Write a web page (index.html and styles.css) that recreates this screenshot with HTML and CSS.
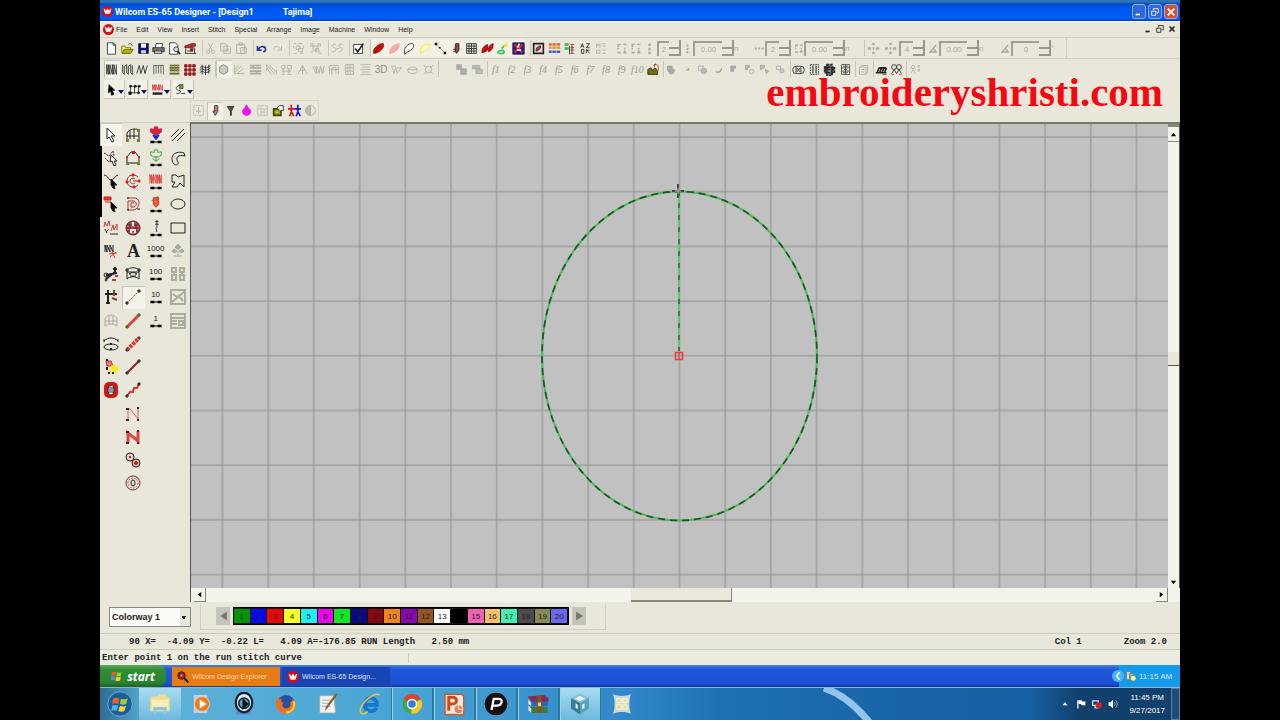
FILE: index.html
```html
<!DOCTYPE html>
<html lang="en">
<head>
    <meta charset="UTF-8">
    <meta name="viewport" content="width=device-width, initial-scale=1.0">
    <title>Wilcom ES-65 Designer</title>
    <link rel="stylesheet" href="styles.css">
</head>
<body>
<svg class="defs" aria-hidden="true">
    <symbol id="logo" viewBox="0 0 16 16"><circle cx="8" cy="8" r="8" fill="#d01018"/><path d="M3 4l2 7h6l2-7-3 4-2-4-2 4z" fill="#fff" stroke="#fff"/></symbol>
    <symbol id="bow" viewBox="0 0 16 5"><path d="M1 1h5v3H1zM10 1h5v3h-5zM6 2h4v1H6z" fill="#000"/></symbol>
    <symbol id="pts" viewBox="0 0 16 16"><path d="M3 3h4M10 3h4M3 8h2M11 8h2M3 13h4M10 13h4M4 3v3M12 10v3" stroke-width="2"/></symbol>
    <symbol id="vdots" viewBox="0 0 16 16"><path d="M8 2v3M8 7v3M8 12v3" stroke-width="3"/></symbol>
    <symbol id="hdots" viewBox="0 0 16 16"><path d="M1 8h3M6 8h3M11 8h3" stroke-width="3"/></symbol>
    <symbol id="cross" viewBox="0 0 16 16"><path d="M8 1v3M8 12v3M1 8h4M11 8h4M7 8h2" stroke-width="3"/></symbol>
    <symbol id="angle" viewBox="0 0 16 16"><path d="M12 3L3 13h10M8 8l3 4" stroke-width="2"/></symbol>
    <symbol id="needle" viewBox="0 0 16 16"><path d="M9 1v9M7 3h4M7 6h4M8 10l1 5"/></symbol>
</svg>
<div class="screen">
    <header class="titlebar">
        <svg class="logo"><use href="#logo"/></svg>
        <h1>Wilcom ES-65 Designer - [Design1</h1>
        <span class="machine">Tajima]</span>
        <div class="window-buttons">
            <button aria-label="Minimize"><svg viewBox="0 0 12 12"><path d="M2 9h5" stroke-width="2"/></svg></button>
            <button aria-label="Restore"><svg viewBox="0 0 12 12"><path d="M4 4V2h6v5H8M2 5h5v5H2z"/></svg></button>
            <button class="close" aria-label="Close"><svg viewBox="0 0 12 12"><path d="M2 2l8 8M10 2l-8 8" stroke-width="2"/></svg></button>
        </div>
    </header>

    <nav class="menubar">
        <svg class="logo"><use href="#logo"/></svg>
        <a href="#">File</a><a href="#">Edit</a><a href="#">View</a><a href="#">Insert</a><a href="#">Stitch</a><a href="#">Special</a><a href="#">Arrange</a><a href="#">Image</a><a href="#">Machine</a><a href="#">Window</a><a href="#">Help</a>
        <div class="child-buttons">
            <button aria-label="Minimize design"><svg viewBox="0 0 12 12"><path d="M3 9h5" stroke-width="2"/></svg></button>
            <button aria-label="Restore design"><svg viewBox="0 0 12 12"><path d="M4 4V2h6v5H8M2 5h5v5H2z"/></svg></button>
            <button aria-label="Close design"><svg viewBox="0 0 12 12"><path d="M3 3l6 6M9 3l-6 6" stroke-width="2"/></svg></button>
        </div>
    </nav>

    <div class="toolbar standard">
        <div class="group">
            <button aria-label="New"><svg viewBox="0 0 16 16"><path d="M3 1h7l3 3v11H3zM10 1v3h3" fill="#fff"/></svg></button>
            <button aria-label="Open"><svg viewBox="0 0 16 16"><path d="M1 13V5h4l1 2h6v2" fill="#ffff60" stroke="#606000"/><path d="M1 14l3-5h11l-3 5z" fill="#b0b018" stroke="#606000"/><path d="M9 3c2-2 4-1 5 2"/></svg></button>
            <button aria-label="Save"><svg viewBox="0 0 16 16"><path d="M2 2h12v12H2z" fill="#10107a"/><path d="M5 2h6v5H5z" fill="#fff" stroke="none"/><path d="M5 10h6v4H5z" fill="#ccc" stroke="none"/></svg></button>
            <button aria-label="Print"><svg viewBox="0 0 16 16"><path d="M4 7l1-5h8l-1 5" fill="#fff"/><path d="M1 7h14v5H1z" fill="#777"/><path d="M3 11h9v3H3z" fill="#ddd"/></svg></button>
            <button aria-label="Print preview"><svg viewBox="0 0 16 16"><path d="M2 1h7l3 3v11H2z" fill="#fff"/><circle cx="10" cy="9" r="3" fill="#cdd"/><path d="M12 11l3 4" stroke-width="2"/></svg></button>
            <button aria-label="Stitch machine"><svg viewBox="0 0 16 16"><path d="M1 5l8-3h5v3l-3 1v5H8V7H1z" fill="#b83030" stroke="#702020"/><path d="M1 14h14M2 8v6M13 7v7M4 11h7"/></svg></button>
        </div>
        <div class="group off">
            <button aria-label="Cut"><svg viewBox="0 0 16 16"><path d="M5 1l5 9M11 1l-5 9"/><circle cx="5" cy="12" r="2"/><circle cx="11" cy="12" r="2"/></svg></button>
            <button aria-label="Copy"><svg viewBox="0 0 16 16"><path d="M2 2h6l2 2v7H2zM6 5h6l2 2v7H6zM8 9h4M8 11h4"/></svg></button>
            <button aria-label="Paste"><svg viewBox="0 0 16 16"><path d="M2 3h10v11H2zM5 1h4v3H5zM7 7h7v7H7zM9 10h3"/></svg></button>
        </div>
        <div class="group">
            <button aria-label="Undo"><svg viewBox="0 0 16 16"><path d="M3 5v5h5M4 9c3-5 9-4 9 0 0 2-1 3-3 3" stroke="#3030a0" stroke-width="2"/></svg></button>
            <button class="off" aria-label="Redo"><svg viewBox="0 0 16 16"><path d="M13 5v5H8M12 9C9 4 3 5 3 9"/></svg></button>
        </div>
        <div class="group off">
            <button aria-label="Group"><svg viewBox="0 0 16 16"><path d="M2 2h3M8 2h5M2 5v3M14 5v3M2 14h4M10 14h4M5 5h5v4H5zM8 8h5v4H8z"/></svg></button>
            <button aria-label="Ungroup"><svg viewBox="0 0 16 16"><path d="M2 2h3v3H2zM11 2h3v3h-3zM5 5h5v5H5zM8 8h4v4H8zM2 12h3M12 14h3"/></svg></button>
        </div>
        <div class="group off">
            <button aria-label="Lock"><svg viewBox="0 0 16 16"><path d="M6 3C1 1 1 7 4 7s3 6-3 5M14 3c-5-2-5 4-2 4s3 6-3 5M7 8h3"/></svg></button>
        </div>
        <div class="group">
            <button aria-label="Object properties"><svg viewBox="0 0 16 16"><path d="M2 3h11v11H2z" fill="#fff"/><path d="M4 8l3 4 7-10" stroke-width="2"/></svg></button>
        </div>
        <div class="group sunk">
            <button aria-label="Artistic view"><svg viewBox="0 0 16 16"><path d="M2 14c-2-6 7-13 12-12 2 6-6 12-12 12z" fill="#d01010" stroke="#a01010"/><path d="M3 13L11 5" stroke="#500"/></svg></button>
            <button aria-label="Show stitches"><svg viewBox="0 0 16 16"><path d="M2 14c-1-6 6-12 12-12 1 6-6 12-12 12z" fill="#f5a8a8" stroke="#f0a0a0" stroke-dasharray="2 1"/></svg></button>
            <button aria-label="Show outlines"><svg viewBox="0 0 16 16"><path d="M2 15V9c1-4 6-8 10-7 4 4-3 9-6 10z" fill="#fff"/></svg></button>
            <button aria-label="Show selected"><svg viewBox="0 0 16 16"><path d="M2 14V9c2-5 7-7 11-6 0 5-4 8-7 8z" stroke="#f0f060" stroke-width="2" fill="#fffff0"/></svg></button>
            <button aria-label="Needle points"><svg viewBox="0 0 16 16"><path d="M3 3l10 10" stroke="#e08080"/><path d="M1 1h3v3H1zM12 12h3v3h-3zM6 6h2v2H6z" fill="#000" stroke="none"/></svg></button>
            <button aria-label="Needle position"><svg viewBox="0 0 16 16"><path d="M7 2h4v8l-3 4-2-4zM4 9h3M4 12h3" fill="#944"/></svg></button>
            <button aria-label="Grid"><svg viewBox="0 0 16 16"><path d="M2 2h12v12H2zM5 2v12M8 2v12M11 2v12M2 5h12M2 8h12M2 11h12"/></svg></button>
            <button aria-label="Connectors"><svg viewBox="0 0 16 16"><path d="M1 13c0-5 3-9 7-10v6c1-3 3-6 7-7 0 6-2 9-6 10V8c-1 3-4 5-8 5z" fill="#c01010" stroke="#901010"/></svg></button>
            <button aria-label="Functions"><svg viewBox="0 0 16 16"><path d="M2 14c0-4 8-5 8-2s-6 3-6 1M7 8l4-4" stroke="#30c050" stroke-width="2"/><path d="M10 2h4v4h-4z" fill="#f4e820" stroke="none"/></svg></button>
            <button aria-label="Bitmap"><svg viewBox="0 0 16 16"><path d="M1 1h14v14H1z" fill="#1818a0"/><path d="M3 3l10 10M13 3L3 13" stroke="#e02020" stroke-width="3"/><path d="M9 2l-2 5M6 10h5" stroke="#fff" stroke-width="2"/></svg></button>
        </div>
        <div class="group">
            <button aria-label="Overview window"><svg viewBox="0 0 16 16"><path d="M2 2h12v12H2z" fill="#ddd" stroke-width="2"/><path d="M5 11c0-5 3-6 6-6-1 4-3 6-6 6z" fill="#d03030"/></svg></button>
            <button aria-label="Colour object list"><svg viewBox="0 0 16 16"><path d="M1 3h14" stroke="#e06040" stroke-width="3"/><path d="M1 7h14" stroke="#d8a020" stroke-width="3"/><path d="M1 12h14" stroke="#5050d0" stroke-width="3"/><path d="M5 1v14M10 1v14" stroke="#ddd"/></svg></button>
            <button aria-label="Stitch list"><svg viewBox="0 0 16 16"><path d="M2 3h5M2 8h5" stroke="#30c040" stroke-width="3"/><path d="M9 3h5M9 7h5M9 10h5M9 14h5" stroke="#d03030"/><path d="M8 5v10M11 3v11"/></svg></button>
            <button aria-label="Automatic spacing"><svg viewBox="0 0 16 16"><path d="M2 7l2-5 2 5M3 5h2M9 2h4l-4 5h4M3 9h3v5H3zM9 9l4 5M13 10H9v4" stroke-width="1"/></svg></button>
            <button class="off" aria-label="Stitch values"><svg viewBox="0 0 16 16"><path d="M2 7V2l2 3 2-3v5M9 2h4M9 5h4M2 10h4v4H2zM9 10h4M9 14h4"/></svg></button>
        </div>
        <div class="fields off">
            <div class="group plain">
                <button aria-label="Align left"><svg><use href="#pts"/></svg></button>
                <button aria-label="Align right"><svg><use href="#pts"/></svg></button>
                <button aria-label="Rows"><svg><use href="#vdots"/></svg></button>
            </div>
            <div class="number"><input aria-label="Row count" value="2"><button aria-label="Change row count"></button></div>
            <svg class="glyph"><use href="#vdots"/></svg>
            <div class="number"><input aria-label="Row spacing" value="0.00"><button aria-label="Change row spacing"></button></div>
            <span>n</span>
            <svg class="glyph"><use href="#hdots"/></svg>
            <div class="number"><input aria-label="Column count" value="2"><button aria-label="Change column count"></button></div>
            <svg class="glyph"><use href="#pts"/></svg>
            <div class="number"><input aria-label="Column spacing" value="0.00"><button aria-label="Change column spacing"></button></div>
            <span>n</span>
            <div class="group">
                <button aria-label="Mirror copy"><svg><use href="#cross"/></svg></button>
                <button aria-label="Kaleidoscope"><svg><use href="#cross"/></svg></button>
            </div>
            <div class="number"><input aria-label="Repeats" value="4"><button aria-label="Change repeats"></button></div>
            <svg class="glyph"><use href="#angle"/></svg>
            <div class="number"><input aria-label="Scale" value="0.00"><button aria-label="Change scale"></button></div>
            <span>n</span>
            <svg class="glyph"><use href="#angle"/></svg>
            <div class="number"><input aria-label="Angle" value="0"><button aria-label="Change angle"></button></div>
            <span>°</span>
        </div>
    </div>

    <div class="toolbar stitch">
        <div class="group">
            <button class="on" aria-label="Satin"><svg viewBox="0 0 16 16"><path d="M2 14V2l2 12V2l2 12V2l3 12V2l2 12V2l3 12V2"/></svg></button>
            <button aria-label="Tatami"><svg viewBox="0 0 16 16"><path d="M2 2v10l2 2V4l3-2v10l2 2V4l3-2v10l2 2V3"/></svg></button>
            <button aria-label="Zigzag"><svg viewBox="0 0 16 16"><path d="M1 13L4 3l2 10L9 3l2 10 3-10"/></svg></button>
            <button aria-label="E stitch"><svg viewBox="0 0 16 16"><path d="M2 14V3h12v11M5 3v10M8 3v10M11 3v10" stroke="#555"/></svg></button>
            <button aria-label="Program split"><svg viewBox="0 0 16 16"><path d="M2 3h12M2 6h12M2 9h12M2 13h12" stroke="#5c6020" stroke-width="2"/><path d="M4 2v12M8 2v12M12 2v12" stroke="#8c9040"/></svg></button>
            <button aria-label="Motif"><svg viewBox="0 0 16 16"><path d="M2 2h3v3H2zM7 2h3v3H7zM12 2h3v3h-3zM2 7h3v3H2zM7 7h3v3H7zM12 7h3v3h-3zM2 12h3v3H2zM7 12h3v3H7zM12 12h3v3h-3z" fill="#c01010" stroke="#801010"/></svg></button>
            <button aria-label="Contour"><svg viewBox="0 0 16 16"><path d="M1 6c4-5 6 4 13-3M1 9c4-5 6 4 13-3M1 12c4-5 6 4 13-3M4 2v12M8 3v12M12 2v11"/></svg></button>
        </div>
        <div class="group off">
            <button class="on" aria-label="Auto underlay"><svg viewBox="0 0 16 16"><path d="M8 2l5 3v6l-5 3-5-3V5z" fill="#ccccbe" stroke="#777"/></svg></button>
            <button aria-label="Pull compensation"><svg viewBox="0 0 16 16"><path d="M2 2v11h12M3 11L11 3M6 12l7-5M6 3L3 8"/></svg></button>
            <button aria-label="Auto split"><svg viewBox="0 0 16 16"><path d="M1 3h14M1 6h14M1 10h14M1 13h14M5 3v3M10 10v3" stroke-width="2"/></svg></button>
            <button aria-label="Fractional spacing"><svg viewBox="0 0 16 16"><path d="M2 2l10 12M5 2l8 9M2 6l6 8M2 2v8M14 14V8"/></svg></button>
            <button aria-label="Jagged edge"><svg viewBox="0 0 16 16"><path d="M2 3h4v4H2zM9 3h5v4H9zM4 7v6M11 7v6M2 10h12M2 14h4M9 14h5"/></svg></button>
            <button aria-label="Travel on edge"><svg viewBox="0 0 16 16"><path d="M8 3L2 14M8 3l6 11M5 9h6M8 3v11"/></svg></button>
            <button aria-label="Accordion spacing"><svg viewBox="0 0 16 16"><path d="M1 4l4 9 1-9 3 9 1-9 3 9 2-10M3 4l4 9M10 4l4 8"/></svg></button>
            <button aria-label="Colour blending"><svg viewBox="0 0 16 16"><path d="M3 14V3h11v11M6 14V6l5-1v8M3 8h11"/></svg></button>
            <button aria-label="Trapunto"><svg viewBox="0 0 16 16"><path d="M3 2h10v12H3zM6 2v12M9 2v12M3 6h10M3 10h10"/></svg></button>
            <button aria-label="Feather"><svg viewBox="0 0 16 16"><path d="M2 2h12M4 5h9M2 8h12M4 11h9M2 14h12"/></svg></button>
            <button class="word" aria-label="3D">3D</button>
            <button aria-label="Warp"><svg viewBox="0 0 16 16"><path d="M2 4l3 9 2-8 2 8 5-8M2 4h5M9 6h5"/></svg></button>
            <button aria-label="Curved fill"><svg viewBox="0 0 16 16"><ellipse cx="8" cy="9" rx="6" ry="4"/><path d="M2 8h12"/></svg></button>
            <button aria-label="Radial fill"><svg viewBox="0 0 16 16"><circle cx="8" cy="8" r="4"/><path d="M2 3l4 2M14 3l-4 2M2 13l4-2M14 13l-4-2"/></svg></button>
        </div>
        <div class="group offset off">
            <button aria-label="Bring forward"><svg viewBox="0 0 16 16"><path d="M2 2h6v6H2zM7 7h7v7H7z" fill="#aaa"/></svg></button>
            <button aria-label="Send back"><svg viewBox="0 0 16 16"><path d="M2 3h9v4H2zM6 8h8v5H6z" fill="#bbb"/></svg></button>
        </div>
        <div class="group fn off">
            <button>f1</button><button>f2</button><button>f3</button><button>f4</button><button>f5</button><button>f6</button><button>f7</button><button>f8</button><button>f9</button><button>f10</button>
            <button aria-label="Function files"><svg viewBox="0 0 16 16"><path d="M1 14V8l4-2 1 3 4-3 3 3v5z" fill="#707010" stroke="#303008"/><path d="M9 5c0-4 5-4 5 0v4" stroke="#d03020"/><path d="M8 3l3-2" stroke="#222"/></svg></button>
        </div>
        <div class="group shapes">
            <button aria-label="Weld"><svg viewBox="0 0 16 16"><path d="M2 3h7v3l4 3-3 5H6L2 9z" fill="#aaa"/></svg></button>
            <button aria-label="Intersect"><svg viewBox="0 0 16 16"><path d="M6 9l4-3v3z" fill="#aaa"/></svg></button>
            <button aria-label="Combine"><svg viewBox="0 0 16 16"><path d="M2 3h7v6H2z"/><circle cx="10" cy="10" r="4" fill="#bbb"/></svg></button>
            <button aria-label="Trim"><svg viewBox="0 0 16 16"><path d="M12 6c2 6-6 8-8 5 4 1 7 0 8-5z" fill="#aaa"/></svg></button>
            <button aria-label="Corner"><svg viewBox="0 0 16 16"><path d="M4 3h7v3H8v5H4z" fill="#aaa"/></svg></button>
            <button aria-label="Exclude"><svg viewBox="0 0 16 16"><path d="M2 2h6v3H5v3H2z" fill="#bbb"/><circle cx="11" cy="11" r="3"/></svg></button>
            <button aria-label="Divide"><svg viewBox="0 0 16 16"><path d="M2 2h6v3L4 8H2zM9 8l5 2-3 4z" fill="#bbb"/></svg></button>
            <button aria-label="Flatten"><svg viewBox="0 0 16 16"><path d="M2 3h6v5H2z"/><circle cx="10" cy="10" r="3" fill="#ccc"/></svg></button>
        </div>
        <div class="group">
            <button aria-label="Remove overlaps"><svg viewBox="0 0 16 16"><rect x="1" y="4" width="14" height="9" rx="4"/><path d="M5 5v7M11 5v7M6 6l4 5M10 6l-4 5"/></svg></button>
            <button aria-label="Border"><svg viewBox="0 0 16 16"><path d="M3 2h10v12H3z" stroke-dasharray="2 1"/><path d="M6 3v10M10 3v10" stroke="#666" stroke-width="2"/></svg></button>
            <button aria-label="Frame"><svg viewBox="0 0 16 16"><path d="M2 5h12v7H2zM5 2h6v13H5zM2 8h12" stroke-width="2" stroke-dasharray="3 1" fill="#888"/></svg></button>
            <button aria-label="Layout"><svg viewBox="0 0 16 16"><path d="M3 2h10v12H3zM3 6h10M3 10h10M8 2v12M5 4h6M5 12h6M6 8h4" stroke="#444"/></svg></button>
        </div>
        <div class="group off">
            <button aria-label="Layers"><svg viewBox="0 0 16 16"><path d="M3 5h8v9H3zM5 5V3h8v9h-2M5 8h4M5 11h4"/></svg></button>
        </div>
        <div class="group">
            <button aria-label="Hoop"><svg viewBox="0 0 16 16"><path d="M1 12h13M3 11l2-5M6 11l2-5M9 11l2-5M12 11l2-5M5 6h9" stroke-width="2"/><path d="M9 14h5" stroke="#c33"/></svg></button>
            <button aria-label="Team names"><svg viewBox="0 0 16 16"><circle cx="5" cy="5" r="3"/><circle cx="11" cy="5" r="3"/><path d="M2 13l3-5 3 5 3-5 3 5"/><path d="M2 14h3M11 14h3" stroke="#c33"/></svg></button>
        </div>
        <div class="group off">
            <button aria-label="Monogram"><svg viewBox="0 0 16 16"><circle cx="5" cy="5" r="2"/><path d="M2 13l3-5 3 5M11 3h2v2h-2zM11 8h2v2h-2z"/></svg></button>
        </div>
    </div>

    <div class="toolbar flyouts">
        <button aria-label="Select tools"><svg viewBox="0 0 16 16"><path d="M5 2l7 7H9l2 5-3 1-1-5-3 2z" fill="#000"/></svg></button>
        <button aria-label="Input tools"><svg viewBox="0 0 16 16"><path d="M3 4h10v8H3zM8 3v10"/><path d="M2 3h2v2H2zM8 3h2v2H8zM13 3h2v2h-2zM1 11h3v3H1zM12 11h2v2h-2z" fill="#000"/></svg></button>
        <button aria-label="Stitch tools"><svg viewBox="0 0 16 16"><path d="M2 9V2l2 7V2l2 7V2l3 7V2l2 7V2l3 7V2" stroke="#d83030"/><path d="M2 13h12" stroke-width="3"/></svg></button>
        <button aria-label="Machine tools"><svg viewBox="0 0 16 16"><path d="M7 2h4v5H7z" fill="#8a9020" stroke="#444"/><path d="M7 3C1 4 2 9 6 9s2 5-3 4M9 13h5"/></svg></button>
    </div>

    <div class="toolbar options">
        <button class="off" aria-label="Centre"><svg viewBox="0 0 16 16"><path d="M2 2h12v12H2z" stroke-dasharray="2 1"/><path d="M8 4v8M5 9h6"/></svg></button>
        <button class="on" aria-label="Needle up"><svg viewBox="0 0 16 16"><path d="M8 2h4v7l-3 5-3-5h2z" fill="#b88"/><path d="M6 10l5-3" stroke="#c22"/></svg></button>
        <button aria-label="Tie off"><svg viewBox="0 0 16 16"><path d="M4 3h8l-3 6v5H8V9z" fill="#555"/></svg></button>
        <button aria-label="Trim colour"><svg viewBox="0 0 16 16"><path d="M8 1l2 4c6 3 3 9-2 9s-7-6-2-9z" fill="#f010f0" stroke="#e010e0"/></svg></button>
        <button class="off" aria-label="Matrix"><svg viewBox="0 0 16 16"><path d="M2 2h12v12H2zM6 2v12M2 6h12M10 6v8M6 10h8" stroke-dasharray="2 1"/></svg></button>
        <button aria-label="Open folder"><svg viewBox="0 0 16 16"><path d="M2 6h9v8H2z" fill="#96952a" stroke="#444410" stroke-width="2"/><path d="M6 5l3-3h5v6h-3" fill="#f4f4e4"/><path d="M4 10h4" stroke="#ff6"/></svg></button>
        <button aria-label="Operators"><svg viewBox="0 0 16 16"><path d="M4 1v9l-2 5M4 9l3 6M0 6h8" stroke="#e01010" stroke-width="2"/><path d="M12 1v9l-2 5M12 9l3 6M8 6h8" stroke="#1010d0" stroke-width="2"/></svg></button>
        <button class="off" aria-label="Contrast"><svg viewBox="0 0 16 16"><circle cx="8" cy="8" r="6"/><path d="M8 2a6 6 0 0 0 0 12z" fill="#bbb"/></svg></button>
    </div>

    <main class="workspace">
        <div class="palette">
            <div class="column">
                <button class="on" aria-label="Select object"><svg viewBox="0 0 16 16"><path d="M4 1l8 8H8l3 5-2 1-3-5-2 2z" fill="#fff"/></svg></button>
                <button aria-label="Polygon select"><svg viewBox="0 0 16 16"><path d="M1 3l5 3 4-5 1 5M2 8l4 4" stroke-dasharray="2 1"/><path d="M8 5l6 6h-3l2 4-2 1-2-5-2 1z" fill="#fff"/></svg></button>
                <button aria-label="Reshape"><svg viewBox="0 0 16 16"><path d="M1 2c5 1 4 5 7 5s3-4 7-5"/><path d="M8 6l6 6h-3l1 4-2-1-2-3z" fill="#000"/></svg></button>
                <button aria-label="Stitch edit"><svg viewBox="0 0 16 16"><path d="M1 1h7v3H1zM2 6h6" fill="#e33" stroke="#c22"/><path d="M8 6l6 6h-3l1 4-2-1-2-3z" fill="#000"/></svg></button>
                <button aria-label="Reshape angles"><svg viewBox="0 0 16 16"><path d="M1 7l1-5 2 4 2-5 1 5M8 11l2-6 1 5 3-6v6M3 12l3-3" stroke="#d33"/><path d="M7 14h8M2 9l2 4"/></svg></button>
                <button aria-label="Stitch to object"><svg viewBox="0 0 16 16"><path d="M2 9V2l2 7V2l3 7V2l3 7V2"/><path d="M6 11l8-1M7 14l6-5M9 9l3 6" stroke="#d33"/></svg></button>
                <button aria-label="Cut shape"><svg viewBox="0 0 16 16"><path d="M3 9l11-2M3 13L12 6M12 1v5M10 3h4" stroke-width="2"/><circle cx="3" cy="9" r="2"/><circle cx="3" cy="14" r="1"/><path d="M9 14h4M12 10h3" stroke="#c33" stroke-width="2"/></svg></button>
                <button aria-label="Travel"><svg viewBox="0 0 16 16"><path d="M5 1v13M2 5h12M3 14h4" stroke-width="2"/><path d="M11 1v6M9 9l5 2" stroke="#844" stroke-width="2"/></svg></button>
                <button class="off" aria-label="Envelope"><svg viewBox="0 0 16 16"><path d="M2 5c4-4 8-4 12 0v8l-4-2H6l-4 2zM6 3v8M10 3v8M2 8h12"/></svg></button>
                <button aria-label="Travel by object"><svg viewBox="0 0 16 16"><ellipse cx="8" cy="11" rx="7" ry="3"/><path d="M1 5c4-4 10-4 14 0M1 3v3M15 3v3" stroke-width="1"/><path d="M7 8h2M7 13h2" stroke-width="2"/></svg></button>
                <button aria-label="Colour change"><svg viewBox="0 0 16 16"><path d="M3 2h5l2 5H4z" fill="#e77" stroke="#b33"/><circle cx="11" cy="10" r="4" fill="#f8ee20" stroke="none"/><path d="M3 1h2M4 8v3M5 14h2M9 14h2" stroke-width="2"/></svg></button>
                <button aria-label="Stop"><svg viewBox="0 0 16 16"><rect x="1" width="14" height="16" rx="5" fill="#d01818" stroke="none"/><ellipse cx="8" cy="8" rx="3" ry="5" fill="#fff"/><path d="M7 4v7M9 5v6"/></svg></button>
            </div>
            <div class="column">
                <button aria-label="Input A"><svg viewBox="0 0 16 16"><path d="M2 13V6c2-4 9-5 12-3v10M5 4v8M9 2v10M2 9h12"/><path d="M1 12h3v3H1zM12 2h3v3h-3zM12 12h3v3h-3z" fill="#7c8020" stroke="none"/></svg></button>
                <button aria-label="Complex fill"><svg viewBox="0 0 16 16"><path d="M2 13V7l4-5h4l4 5v6z"/><path d="M7 1h3v3H7zM1 6h2v2H1zM13 6h2v2h-2z" fill="#c22" stroke="none"/><path d="M1 12h3v3H1zM12 12h3v3h-3z" fill="#7c8020" stroke="none"/></svg></button>
                <button aria-label="Ring"><svg viewBox="0 0 16 16"><path d="M13 4C9 0 2 2 2 8s7 8 11 4M10 6c-3-2-5 0-5 2s3 4 5 2M8 8h6" stroke="#833"/><path d="M7 1h2v2H7zM13 7h2v2h-2zM1 8h2v2H1zM8 13h2v2H8z" fill="#d22" stroke="#d22"/></svg></button>
                <button aria-label="Complex turning"><svg viewBox="0 0 16 16"><path d="M2 2h8c6 1 5 10-1 12H3V5h6c3 1 3 5 0 6H6V7h3" stroke="#a33"/><path d="M2 2h2M2 14h2M12 13h3"/></svg></button>
                <button aria-label="Fusion fill"><svg viewBox="0 0 16 16"><circle cx="8" cy="8" r="7" fill="#d86060" stroke="#522"/><path d="M2 5h12M1 8h14M2 11h12M5 2v12M11 2v12" stroke="#522"/><path d="M8 2v4M6 13v-3h4v3" stroke="#eee" stroke-width="2"/></svg></button>
                <button class="letter" aria-label="Lettering">A</button>
                <button aria-label="Buttonhole"><svg viewBox="0 0 16 16"><path d="M2 4c3-3 9-3 12 0v9c-3-3-9-3-12 0zM4 8c3-2 5-2 8 0M2 6h12M5 10h6"/><path d="M1 3h2v2H1zM13 3h2v2h-2zM4 8h2M10 8h2"/></svg></button>
                <button class="on" aria-label="Run"><svg viewBox="0 0 16 16"><path d="M2 14L14 2" stroke="#c33" stroke-dasharray="2 1"/><path d="M1 13h2v2H1zM13 1h2v2h-2z" fill="#7c8020"/></svg></button>
                <button aria-label="Triple run"><svg viewBox="0 0 16 16"><path d="M2 14L14 2" stroke="#d44" stroke-width="3"/><path d="M1 13h2v2H1zM13 1h2v2h-2z" fill="#7c8020" stroke="#552"/></svg></button>
                <button aria-label="Motif run"><svg viewBox="0 0 16 16"><path d="M2 14L14 2" stroke="#d33" stroke-width="4" stroke-dasharray="3 1"/><path d="M1 13h2v2H1zM13 1h2v2h-2z" fill="#7c8020" stroke="#343"/></svg></button>
                <button aria-label="Backstitch"><svg viewBox="0 0 16 16"><path d="M2 14L14 2" stroke="#822" stroke-width="2"/><path d="M1 13h2v2H1zM13 1h2v2h-2z" fill="#7c8020"/></svg></button>
                <button aria-label="Stem stitch"><svg viewBox="0 0 16 16"><path d="M2 14l3-4h3l1-4h3l2-4" stroke="#d33" stroke-width="2"/><path d="M1 13h2v2H1zM13 1h2v2h-2z" fill="#7c8020"/></svg></button>
                <button aria-label="Manual"><svg viewBox="0 0 16 16"><path d="M3 14V3h2l8 10V2" stroke="#c66"/><path d="M1 2h3v2H1zM1 13h3v2H1zM12 1h2v2h-2zM12 13h2v2h-2z" fill="#422" stroke="none"/></svg></button>
                <button aria-label="Triple manual"><svg viewBox="0 0 16 16"><path d="M3 14V4l10 8V2" stroke="#d44" stroke-width="3"/><path d="M1 2h3v2H1zM1 13h3v2H1zM12 1h2v2h-2zM12 13h2v2h-2z" fill="#422" stroke="none"/></svg></button>
                <button aria-label="Sequins"><svg viewBox="0 0 16 16"><circle cx="5" cy="5" r="4" fill="#e8cccc"/><circle cx="11" cy="11" r="4" fill="#e8aaaa"/><path d="M4 5h2M9 11h4M11 9v4" stroke="#c22" stroke-width="2"/></svg></button>
                <button aria-label="Eyelet"><svg viewBox="0 0 16 16"><circle cx="8" cy="8" r="7" stroke="#633"/><circle cx="8" cy="8" r="5" stroke="#c55" stroke-dasharray="2 1"/><ellipse cx="8" cy="8" rx="2" ry="3"/></svg></button>
            </div>
            <div class="column">
                <button aria-label="Colour flower"><svg viewBox="0 0 16 16"><path d="M8 8v5" stroke="#0a0" stroke-width="2"/><path d="M6 1h4v3l4-1v4l-3 2H5L2 7V3l4 1z" fill="#e02040" stroke="#c01030"/><path d="M5 10l3 4 3-4" stroke="#22d" stroke-width="3"/></svg><svg class="bow"><use href="#bow"/></svg></button>
                <button aria-label="Outline flower"><svg viewBox="0 0 16 16"><path d="M6 1h4v3l4-1v4l-3 2H5L2 7V3l4 1zM8 8v6M4 11l4 3 4-3" stroke="#393"/></svg><svg class="bow"><use href="#bow"/></svg></button>
                <button aria-label="Stitch density"><svg viewBox="0 0 16 16"><path d="M1 13V3l2 10V3l2 10V3l3 10V3l2 10V3l2 10V3l2 10V3" stroke="#d33"/></svg><svg class="bow"><use href="#bow"/></svg></button>
                <button aria-label="Spool"><svg viewBox="0 0 16 16"><path d="M5 3h6v8l-3 3-3-3z" fill="#e66030" stroke="#b33"/><path d="M3 6h3M10 1v4" stroke="#a52"/></svg><svg class="bow"><use href="#bow"/></svg></button>
                <button aria-label="Needle"><svg><use href="#needle"/></svg><svg class="bow"><use href="#bow"/></svg></button>
                <button>1000<svg class="bow"><use href="#bow"/></svg></button>
                <button>100<svg class="bow"><use href="#bow"/></svg></button>
                <button>10<svg class="bow"><use href="#bow"/></svg></button>
                <button>1<svg class="bow"><use href="#bow"/></svg></button>
            </div>
            <div class="column">
                <button aria-label="Parallel lines"><svg viewBox="0 0 16 16"><path d="M1 10L9 2M2 14L14 2M7 14l8-8"/></svg></button>
                <button aria-label="Arc"><svg viewBox="0 0 16 16"><path d="M4 14C-2 6 6 0 14 3l1 3C8 4 5 8 8 12c1 2-2 4-4 2z"/></svg></button>
                <button aria-label="Closed shape"><svg viewBox="0 0 16 16"><path d="M2 2h4l2 2 6-2v12l-4-4-3 4H2l3-5H2z"/></svg></button>
                <button aria-label="Ellipse"><svg viewBox="0 0 16 16"><ellipse cx="8" cy="8" rx="7" ry="5"/></svg></button>
                <button aria-label="Rectangle"><svg viewBox="0 0 16 16"><path d="M1 3h14v10H1z"/></svg></button>
                <button class="off" aria-label="Auto digitize"><svg viewBox="0 0 16 16"><path d="M8 1l3 3-3 3-3-3zM4 6l3 2-3 2-2-2zM12 6l2 2-2 2-3-2zM8 8v6M4 13h8" fill="#aaa"/></svg></button>
                <button class="off" aria-label="Photo stitch"><svg viewBox="0 0 16 16"><path d="M2 2h4v4H2zM2 9h4v5H2zM10 2h4v4h-4zM10 9h4v5h-4zM4 6v3M12 6v3" stroke-width="2"/></svg></button>
                <button class="off" aria-label="Smart design"><svg viewBox="0 0 16 16"><path d="M1 1h14v14H1zM1 14L15 2M3 5l5 4M8 6l5 6" stroke-width="2"/></svg></button>
                <button class="off" aria-label="Image prepare"><svg viewBox="0 0 16 16"><path d="M1 1h14v14H1zM1 5h14M1 8h6M1 11h6M9 8h4v4H9z" stroke-width="2"/></svg></button>
            </div>
        </div>
        <div class="design">
            <div class="view">
                <svg class="canvas" role="img" aria-label="Design1">
                    <defs>
                        <pattern id="grid" x="30.5" y="12" width="45.7" height="54.7" patternUnits="userSpaceOnUse">
                            <path d="M1 0v54.7M0 1h45.7" stroke="#8e8e8e" fill="none"/>
                        </pattern>
                    </defs>
                    <rect width="100%" height="100%" fill="url(#grid)"/>
                    <g fill="none">
                        <path d="M488 67v160" stroke="#5cc864" stroke-width="2"/>
                        <path d="M488 67v160" stroke="#3f7a44" stroke-width="2" stroke-dasharray="5 7"/>
                        <ellipse cx="488.5" cy="232" rx="137.5" ry="164.5" stroke="#4cba54" stroke-width="2"/>
                        <ellipse cx="488.5" cy="232" rx="137.5" ry="164.5" stroke="#1c5426" stroke-width="1.6" stroke-dasharray="7 5"/>
                        <path d="M484.500 228.500h7v7h-7z" stroke="#f03838" stroke-width="1.5"/>
                        <path d="M488 229v6" stroke="#c04040"/>
                        <path d="M487 60v14M481 67h12" stroke="#444" stroke-width="2"/>
                        <path d="M487 64v6M484 67h6" stroke="#bbb"/>
                    </g>
                </svg>
                <div class="scroll vertical">
                    <button aria-label="Scroll up"><svg viewBox="0 0 8 8"><path d="M1 6l3-4 3 4z"/></svg></button>
                    <span class="thumb"></span>
                    <button aria-label="Scroll down"><svg viewBox="0 0 8 8"><path d="M1 2l3 4 3-4z"/></svg></button>
                </div>
            </div>
            <div class="scroll horizontal">
                <button aria-label="Scroll left"><svg viewBox="0 0 8 8"><path d="M6 1L2 4l4 3z"/></svg></button>
                <span class="thumb"></span>
                <button aria-label="Scroll right"><svg viewBox="0 0 8 8"><path d="M2 1l4 3-4 3z"/></svg></button>
            </div>
        </div>
    </main>

    <section class="colorbar">
        <select aria-label="Colorway"><option>Colorway 1</option></select>
        <div class="colors">
            <button class="step" aria-label="Previous colors"><svg viewBox="0 0 8 8"><path d="M7 0L1 4l6 4z"/></svg></button>
            <div class="swatches">
                <button class="c1">1</button><button class="c2">2</button><button class="c3">3</button><button class="c4">4</button><button class="c5">5</button><button class="c6">6</button><button class="c7">7</button><button class="c8">8</button><button class="c9">9</button><button class="c10">10</button><button class="c11">11</button><button class="c12">12</button><button class="c13">13</button><button class="c14">14</button><button class="c15">15</button><button class="c16">16</button><button class="c17">17</button><button class="c18">18</button><button class="c19">19</button><button class="c20">20</button>
            </div>
            <button class="step" aria-label="Next colors"><svg viewBox="0 0 8 8"><path d="M1 0l6 4-6 4z"/></svg></button>
        </div>
    </section>

    <div class="status coords">
        <span class="position">90 X=  -4.09 Y=  -0.22 L=   4.09 A=-176.85 RUN Length   2.50 mm</span>
        <span class="col">Col 1</span>
        <span>Zoom 2.0</span>
    </div>
    <div class="status prompt"><span>Enter point 1 on the run stitch curve</span></div>

    <div class="xp-taskbar">
        <button class="start"><svg viewBox="0 0 16 16"><path d="M1 3c2-1 4-1 6 0L6 8C4 7 2 7 0 8z" fill="#f05a28"/><path d="M8 3c2 1 4 1 6 0l-1 5c-2 1-4 1-6 0z" fill="#8cd83c"/><path d="M0 9c2-1 4-1 6 0l-1 5c-2-1-3-1-5 0z" fill="#4a8cf0"/><path d="M7 9c2 1 4 1 6 0l-1 5c-2 1-4 1-6 0z" fill="#fcd030"/></svg>start</button>
        <button class="task orange"><svg viewBox="0 0 16 16"><circle cx="6" cy="6" r="5" fill="#a02020" stroke="#301010"/><path d="M5 5h2v2H5z" fill="#fff"/><path d="M9 9l6 6" stroke="#222" stroke-width="3"/></svg>Wilcom Design Explorer</button>
        <button class="task current"><svg><use href="#logo"/></svg>Wilcom ES-65 Design...</button>
        <div class="xp-tray">
            <button aria-label="Show hidden icons"><svg viewBox="0 0 16 16"><circle cx="8" cy="8" r="8" fill="#4cb4f4"/><path d="M10 3L6 8l4 5" stroke="#fff" stroke-width="2" fill="none"/></svg></button>
            <svg viewBox="0 0 16 16"><path d="M2 2h5v11H2zM6 5h5v8H6z" fill="#d8d8c8" stroke="#777"/><circle cx="11" cy="11" r="4" fill="#e8f0c0" stroke="#383"/></svg>
            <span>11:15 AM</span>
        </div>
    </div>

    <footer class="taskbar">
        <button class="orb" aria-label="Start"><svg viewBox="0 0 32 32"><circle cx="16" cy="16" r="14" fill="#1c5f98" stroke="#6fb4da"/><path d="M8 10c3-2 5-1 7 0l-1 6c-2-1-5-1-7 0z" fill="#f06030"/><path d="M17 10c3 1 5 1 8-1l-2 7c-2 1-5 1-7 0z" fill="#9ad040"/><path d="M7 18c2-1 5-1 7 0l-2 6c-2-1-4-1-6 0z" fill="#50b0f0"/><path d="M16 18c2 1 5 1 7 0l-2 6c-2 1-5 1-7 0z" fill="#fcd040"/></svg></button>
        <button class="lit" aria-label="Explorer"><svg viewBox="0 0 32 32"><path d="M3 6h10l2-3h9l1 4h4v19H3z" fill="#f0dc90"/><path d="M5 10h22v12H5z" fill="#fbefb8"/><path d="M7 29v-9h18v9h-4v-5H11v5z" fill="#8cc4e8"/></svg></button>
        <button aria-label="Media player"><svg viewBox="0 0 32 32"><path d="M5 4h18v24H5z" fill="#b8d4ec"/><circle cx="16" cy="16" r="10" fill="#f07c20" stroke="#fbd0a0"/><path d="M13 10l9 6-9 6z" fill="#fff"/></svg></button>
        <button aria-label="Video tool"><svg viewBox="0 0 32 32"><path d="M5 14h20v16H5z" fill="#6088c8"/><ellipse cx="16" cy="14" rx="11" ry="13" fill="#dceaf4" stroke="#102030" stroke-width="3"/><circle cx="16" cy="15" r="7" fill="#5aa0c8" stroke="#123" stroke-width="2"/><path d="M14 8l8 8-8 8z" fill="#111"/></svg></button>
        <button aria-label="Firefox"><svg viewBox="0 0 32 32"><circle cx="16" cy="16" r="12" fill="#28509c"/><path d="M4 6c1 4 3 4 7 3-3 3-2 5 2 5-3 2-3 7 3 8 6 0 7-5 5-9 3 1 4 0 3-4 8 8 5 20-8 20C4 29 0 18 4 6z" fill="#f07020"/><path d="M26 12c3 8-2 15-10 15" stroke="#fcc838" stroke-width="3" fill="none"/></svg></button>
        <button aria-label="Notes"><svg viewBox="0 0 32 32"><path d="M5 5h19l2 23H5z" fill="#f4f2e8" stroke="#a8a8a0"/><path d="M8 11h12M8 15h10M8 19h12" stroke="#99a" stroke-width="1"/><path d="M29 3L15 22l-3 3 1-5L26 2z" fill="#806040"/></svg></button>
        <button aria-label="Internet Explorer"><svg viewBox="0 0 32 32"><path d="M25 21c-6 9-18 3-16-6 3-11 17-8 16 2H11" stroke="#1478d0" stroke-width="5" fill="none"/><path d="M4 28C-2 20 21-2 29 4M4 28c3 2 7 0 9-2" stroke="#f2c838" stroke-width="2" fill="none"/></svg></button>
        <button class="framed" aria-label="Chrome"><svg viewBox="0 0 32 32"><circle cx="16" cy="16" r="13" fill="#3ba757"/><path d="M16 16L5 9A13 13 0 0 1 28 10H16z" fill="#e33e30"/><path d="M16 16l12-6a13 13 0 0 1-13 19z" fill="#fbc918"/><circle cx="16" cy="16" r="6" fill="#3b78d8" stroke="#fff" stroke-width="2"/></svg></button>
        <button class="framed" aria-label="PowerPoint"><svg viewBox="0 0 32 32"><path d="M4 3h22l3 3v24H4z" fill="#f4e8e0" stroke="#d05828" stroke-width="2"/><path d="M9 25V7h5c7 0 7 9 0 9H9" fill="none" stroke="#d04818" stroke-width="4"/><circle cx="22" cy="23" r="6" fill="#e88058" stroke="#fff"/><path d="M22 17v6h6" stroke="#fff" fill="none"/></svg></button>
        <button class="framed" aria-label="P player"><svg viewBox="0 0 32 32"><circle cx="16" cy="16" r="15" fill="#180c10"/><path d="M10 24l3-15h7c6 0 4 9-2 9h-6" stroke="#fff" stroke-width="3" fill="none"/></svg></button>
        <button class="framed" aria-label="WinRAR"><svg viewBox="0 0 32 32"><path d="M2 6l22-2 6 4v5L8 14z" fill="#7c3058"/><path d="M3 13h26v6H6z" fill="#2868b8"/><path d="M3 20h26v8H7z" fill="#388038"/><path d="M3 10l4 4v5l-4-3M3 18l4 4v6l-4-4z" fill="#ddd"/><path d="M15 5h6v23h-6z" fill="#8c5020"/><path d="M16 14h4v5h-4z" fill="#f0d060"/></svg></button>
        <button class="lit framed" aria-label="VirtualBox"><svg viewBox="0 0 32 32"><path d="M16 2l12 6v14l-12 8-12-8V8z" fill="#88bfd0"/><path d="M16 15v15L4 22V8z" fill="#347c98"/><path d="M16 15l12-7v14l-12 8z" fill="#5ba2b8"/><path d="M9 9l7-4 7 4-7 3zM10 15l3 2v6l-3-2zM22 15l-3 2v6l3-2z" fill="#e8f4f8"/></svg></button>
        <button aria-label="Embroidery"><svg viewBox="0 0 32 32"><path d="M4 3c8 3 16 3 24 0-3 8-3 18 0 26-8-3-16-3-24 0 3-8 3-18 0-26z" fill="#c8d8e4"/><path d="M9 9h6v5H9zM17 9h6v5h-6zM9 17h6v6H9zM17 17h6v6h-6z" fill="#ecdf70" stroke="#fff"/></svg></button>
        <svg class="glow" viewBox="0 0 60 33" aria-hidden="true"><path d="M3 0c18 6 34 20 46 35" stroke="#94c4ec" stroke-width="7" fill="none"/></svg>
        <div class="tray">
            <svg viewBox="0 0 16 16"><path d="M4 10l4-5 4 5z" fill="#fff"/></svg>
            <svg viewBox="0 0 16 16"><path d="M3 2v13" stroke="#fff" stroke-width="2"/><path d="M4 2h5l1 2h5v6H9L8 8H4z" fill="#fff"/></svg>
            <svg viewBox="0 0 16 16"><path d="M1 3h9v7H1zM5 10v4h6" fill="none" stroke="#dde" stroke-width="2"/><circle cx="11" cy="10" r="5" fill="#d02020"/></svg>
            <svg viewBox="0 0 16 16"><path d="M1 5h3l4-4v14l-4-4H1z" fill="#fff"/><path d="M10 5c2 2 2 4 0 6M12 2c4 4 4 8 0 12" stroke="#dde" fill="none"/></svg>
            <div class="clock"><span>11:45 PM</span><span>9/27/2017</span></div>
            <button class="peek" aria-label="Show desktop"></button>
        </div>
    </footer>
    <p class="watermark">embroideryshristi.com</p>
</div>
</body>
</html>
```
FILE: styles.css
```css
:root {
    --face: #e8e7d9;
    --shade: #c6c5b8;
    --dark: #55554c;
    --off: #acab9f;
    --ui: "Liberation Sans", Arial, sans-serif;
    --mono: "Liberation Mono", "Courier New", monospace;
}

* {
    margin: 0;
    padding: 0;
    box-sizing: border-box;
}

body {
    background-color: #000;
    padding: 0 100px;
    font-family: var(--ui);
    font-size: 7px;
    color: #222;
}

.defs {
    position: absolute;
    width: 0;
    height: 0;
}

button {
    border: none;
    background: none;
    font: inherit;
    color: inherit;
    display: flex;
    align-items: center;
    justify-content: center;
}

a {
    color: inherit;
    text-decoration: none;
}

.screen {
    position: relative;
    display: flex;
    flex-direction: column;
    height: 100vh;
    background-color: var(--face);
    overflow: hidden;
}

/* Title bar and menu */
.titlebar {
    display: flex;
    align-items: center;
    height: 21px;
    padding: 2px 2px 0;
    background: linear-gradient(#2d74b4 0, #2d74b4 2px, #0048d0 4px, #0058ee 8px, #005cf8 19px, #0038b8 21px);
    color: #fff;
    font-family: Roboto, sans-serif;
    font-size: 9px;
    font-weight: 700;
}

.titlebar h1 {
    font-size: 9px;
    margin-left: 2px;
}

.logo {
    width: 11px;
    height: 11px;
}

.machine {
    margin-left: 29px;
}

.window-buttons,
.child-buttons {
    display: flex;
    gap: 2px;
    margin-left: auto;
}

.window-buttons button {
    width: 14px;
    height: 15px;
    border: 1px solid #8fb0f0;
    border-radius: 3px;
    background-color: #2f68dc;
}

.window-buttons .close {
    background-color: #d8502c;
}

.window-buttons svg,
.child-buttons svg {
    width: 10px;
    height: 10px;
    fill: none;
    stroke: currentColor;
}

.menubar {
    display: flex;
    align-items: center;
    gap: 9px;
    height: 16px;
    padding: 0 3px 1px;
    border-top: 1px solid #fff;
    font-size: 7px;
}

.menubar .logo {
    margin-right: -7px;
}

/* Toolbars */
.toolbar {
    display: grid;
    align-items: center;
    justify-content: start;
    height: 21px;
    padding-left: 4px;
    border-top: 1px solid #d0cfc2;
}

.standard {
    grid-template-columns: 94px 46px 31px 34px 16px 16px 155px 78px auto;
    column-gap: 5px;
}

.stitch {
    grid-template-columns: 109px 220px 46px 173px 124px 62px 15px 30px 16px;
    column-gap: 3px;
}

.group {
    display: flex;
    align-items: center;
    height: 18px;
    box-shadow: -2px 0 0 -1px var(--shade);
}

.group:first-child {
    box-shadow: none;
}

.group button {
    flex: 1;
    min-width: 0;
    height: 18px;
}

.toolbar svg,
.palette svg {
    flex: none;
    width: 13px;
    height: 13px;
    fill: none;
    stroke: currentColor;
}

.offset {
    padding-left: 14px;
}

.sunk {
    background-color: #f2f1e6;
}

.on {
    background-color: #f3f3ea;
    box-shadow: inset 1px 1px 0 var(--shade);
}

.off {
    color: var(--off);
}

.shapes {
    color: #999;
}

.toolbar .shapes svg {
    width: 11px;
    height: 11px;
}

.word {
    font-size: 10px;
    color: #8c8c82;
}

.fn {
    font-family: "Liberation Serif", serif;
    font-size: 10px;
    font-style: italic;
    color: #98978c;
}

.fields {
    display: grid;
    grid-template-columns: 43px 24px 12px 41px 17px 14px 26px 13px 41px 20px 34px 26px 14px 40px 18px 14px 40px 15px;
    align-items: center;
    height: 20px;
    border-right: 1px solid #d0cfc2;
    font-size: 8px;
}

.toolbar .glyph {
    width: 11px;
    height: 11px;
    justify-self: end;
}

.number {
    display: flex;
    align-items: center;
}

.number input {
    flex: 1;
    width: 0;
    height: 15px;
    border: solid #a09f94;
    border-width: 2px 0 0 2px;
    background: none;
    font: inherit;
    color: inherit;
    text-align: center;
}

.number button {
    width: 12px;
    height: 16px;
    border: solid #98978c;
    border-width: 0 2px 2px 0;
    background: linear-gradient(transparent 7px, #98978c 7px, #98978c 9px, transparent 9px);
}

.flyouts {
    display: flex;
    gap: 2px;
    border-top: none;
}

.flyouts button {
    width: 21px;
    height: 19px;
    background-color: #f1f0e6;
    border: solid var(--shade);
    border-width: 0 1px 1px 0;
}

.flyouts button::after {
    content: "";
    border: 3px solid transparent;
    border-top: 4px solid #14145a;
    border-bottom: none;
    margin-top: 6px;
}

.options {
    display: flex;
    width: 129px;
    height: 21px;
    margin-left: 90px;
    padding: 0;
    border: 1px solid #d8d7ca;
}

.options button {
    flex: 1;
    height: 18px;
}

/* Workspace */
.workspace {
    flex: 1;
    display: flex;
    min-height: 0;
    padding-top: 1px;
}

.palette {
    display: grid;
    grid-template-columns: repeat(4, 1fr);
    width: 90px;
    height: 373px;
    padding-right: 1px;
    border-top: 1px solid #ccc;
    background: linear-gradient(#000, #000) 0 0 / 2px 94px no-repeat;
}

.column {
    display: grid;
    grid-template-rows: repeat(16, 1fr);
}

.palette button {
    flex-direction: column;
    font-size: 8px;
    line-height: 10px;
}

.palette svg {
    width: 16px;
    height: 16px;
}

.palette .column:nth-child(3) svg {
    width: 14px;
    height: 14px;
}

.palette .column:nth-child(3) .bow {
    width: 14px;
    height: 4px;
    stroke: none;
}

.palette .letter {
    font-family: "Liberation Serif", serif;
    font-size: 18px;
    font-weight: 700;
}

.design {
    flex: 1;
    display: flex;
    flex-direction: column;
    min-width: 0;
    border-left: 1px solid #55554c;
    border-top: 2px solid #77776c;
}

.view {
    flex: 1;
    display: flex;
    min-height: 0;
}

.canvas {
    flex: 1;
    min-width: 0;
    height: 100%;
    background-color: #c1c1c1;
}

.scroll {
    display: flex;
    justify-content: space-between;
    background-color: #f3f3ec;
}

.scroll svg {
    width: 7px;
    height: 7px;
}

.vertical {
    flex-direction: column;
    width: 12px;
    border-right: 1px solid var(--dark);
}

.vertical button {
    height: 12px;
}

.vertical button:first-child {
    height: 18px;
    border: solid #88877c;
    border-width: 3px 0 1px;
}

.vertical .thumb {
    height: 14px;
    border-bottom: 1px solid var(--dark);
    background-color: var(--face);
}

.horizontal {
    height: 14px;
    padding-right: 12px;
}

.horizontal button {
    width: 12px;
    height: 14px;
    margin-left: 3px;
    border: solid #88877c;
    border-width: 0 1px 1px 0;
}

.horizontal .thumb {
    width: 101px;
    height: 14px;
    margin-left: 4px;
    background-color: #e9e8da;
    border: solid #88877c;
    border-width: 0 1px 2px 0;
}

/* Thread colors */
.colorbar {
    display: flex;
    align-items: center;
    gap: 9px;
    height: 31px;
    padding: 0 0 2px 9px;
}

.colorbar select {
    appearance: none;
    width: 82px;
    height: 20px;
    padding-left: 2px;
    border: 1px solid #888;
    border-radius: 0;
    background: linear-gradient(45deg, transparent 50%, #222 50%) 71px 8px / 3px 3px no-repeat, linear-gradient(315deg, transparent 50%, #222 50%) 74px 8px / 3px 3px no-repeat, linear-gradient(90deg, #fafaf6 70px, var(--face) 70px);
    font: 700 9px var(--ui);
    color: #222;
}

.colors {
    display: flex;
    align-items: center;
    gap: 3px;
    width: 406px;
    height: 26px;
    padding: 0 15px;
    border: solid #d0cfc2;
    border-width: 0 1px 1px;
}

.swatches {
    display: grid;
    grid-template-columns: repeat(20, 1fr);
    width: 336px;
    height: 18px;
    border: 1px solid #000;
}

.swatches button {
    border: solid #111;
    border-width: 1px 1px 1px 0;
    font-size: 8px;
    color: #222;
}

.step {
    width: 14px;
    height: 18px;
    background-color: #c4c4bc;
}

.step svg {
    width: 9px;
    height: 12px;
    fill: #77776e;
}

.c1 { background-color: #059405; }
.c2 { background-color: #0808ee; }
.c3 { background-color: #e80808; }
.c4 { background-color: #ffff28; }
.c5 { background-color: #20eef0; }
.c6 { background-color: #ea08ea; }
.c7 { background-color: #10e820; }
.c8 { background-color: #080880; }
.c9 { background-color: #880810; }
.c10 { background-color: #f08420; }
.c11 { background-color: #8808b0; }
.c12 { background-color: #945624; }
.c13 { background-color: #fff; }
.c14 { background-color: #000; }
.c15 { background-color: #ee62b4; }
.c16 { background-color: #f6c068; }
.c17 { background-color: #40f0b4; }
.c18 { background-color: #4c4c4c; }
.c19 { background-color: #848c54; }
.c20 { background-color: #6868ec; }

.swatches .c14 {
    color: #000;
}

/* Status lines */
.status {
    display: flex;
    align-items: center;
    height: 16px;
    padding: 0 13px 0 29px;
    border-top: 1px solid #cccbbd;
    font: 700 9px var(--mono);
    white-space: pre;
}

.coords .col {
    margin: 0 42px 0 auto;
}

.prompt {
    padding: 0;
    background-color: #ecebdf;
}

.prompt span {
    width: 309px;
    padding-left: 2px;
    border-right: 1px solid #cccbbd;
}

/* Taskbar inside the remote desktop */
.xp-taskbar {
    display: flex;
    align-items: stretch;
    height: 22px;
    background: linear-gradient(#4c84d0, #2058dc 4px, #1c50d4 19px, #1238a0);
    color: #dce6fa;
    font-size: 8px;
}

.start {
    width: 66px;
    gap: 4px;
    border-radius: 0 8px 8px 0;
    background: linear-gradient(#58a858, #2f8c34 5px, #2c8630 17px, #1c6422);
    color: #fff;
    font: italic 700 12px "Open Sans", sans-serif;
}

.xp-taskbar svg {
    flex: none;
    width: 12px;
    height: 12px;
}

.task {
    justify-content: flex-start;
    gap: 3px;
    width: 108px;
    margin: 2px 0 1px 6px;
    padding-left: 5px;
    font-size: 7px;
}

.orange {
    background-color: #e67c14;
    color: #fbd9ae;
}

.current {
    margin-left: 2px;
    background-color: #1844b4;
}

.xp-tray {
    display: flex;
    align-items: center;
    gap: 1px;
    width: 68px;
    margin-left: auto;
    background: linear-gradient(90deg, transparent 7px, #149aec 7px);
}

.xp-tray span {
    margin-left: 1px;
}

/* Host taskbar */
.taskbar {
    display: flex;
    align-items: stretch;
    height: 33px;
    border-top: 1px solid #8cb4cc;
    background: linear-gradient(90deg, #2e6c94 0, #5fb2d8 50px, #48a4d4 300px, #3288c8 520px, #1e72b4 620px, #1964a8 800px, #1660a4 930px, #12406c 980px);
}

.taskbar button {
    width: 42px;
}

.taskbar .orb {
    width: 39px;
}

.taskbar button svg {
    width: 24px;
    height: 24px;
}

.taskbar .orb svg {
    width: 28px;
    height: 28px;
}

.taskbar .lit {
    background: linear-gradient(#a8dcf0, #6cb8dc);
}

.taskbar .framed {
    border: solid #2c789c;
    border-width: 0 1px;
    box-shadow: inset 1px 0 #9cd4ec;
}

.glow {
    width: 60px;
    height: 33px;
    margin-left: 178px;
}

.tray {
    display: flex;
    align-items: center;
    gap: 6px;
    margin-left: auto;
    color: #fff;
    font-size: 8px;
}

.tray svg {
    width: 10px;
    height: 12px;
}

.clock {
    display: flex;
    flex-direction: column;
    align-items: center;
    gap: 4px;
    margin-left: 5px;
}

.taskbar .peek {
    width: 9px;
    align-self: stretch;
    border: 1px solid #5880a8;
    background-color: #204c78;
}

.watermark {
    position: absolute;
    top: 68px;
    right: 17px;
    color: #f60812;
    font: 700 41px/48px "Liberation Serif", "Times New Roman", serif;
}
```
